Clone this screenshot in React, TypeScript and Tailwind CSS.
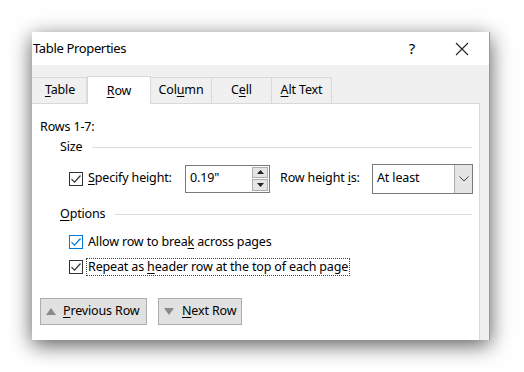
import React from 'react';

const font = { fontFamily: '"Noto Sans", "Open Sans", sans-serif' };

const U: React.FC<{ children: React.ReactNode }> = ({ children }) => <span className="underline underline-offset-2">{children}</span>;

const Tab: React.FC<{ active?: boolean; w: string; children: React.ReactNode }> = ({ active, w, children }) =>
  active ? (
    <div className={`${w} h-[28px] -mb-px bg-white border border-b-0 border-[#d9d9d9] flex items-center justify-center relative z-10 pt-[1px]`}>{children}</div>
  ) : (
    <div className={`${w} h-[26px] bg-[#f0f0f0] border border-b-0 border-l-0 border-[#d9d9d9] flex items-center justify-center`}>{children}</div>
  );

const Check: React.FC<{ blue?: boolean }> = ({ blue }) => (
  <div className={`w-[14px] h-[14px] border ${blue ? 'border-[#0078d7]' : 'border-[#333]'} bg-white flex items-center justify-center`}>
    <svg width="12" height="12" viewBox="0 0 12 12">
      <path d="M1.5 6.2 L4.5 9.2 L10.5 2.5" fill="none" stroke={blue ? '#0078d7' : '#333'} strokeWidth="1.2" />
    </svg>
  </div>
);

const Group: React.FC<{ children: React.ReactNode }> = ({ children }) => (
  <div className="flex items-center gap-[10px] pl-[28px] pr-[7px]">
    <span>{children}</span>
    <div className="flex-1 h-px bg-[#dcdcdc]" />
  </div>
);

export default function App() {
  return (
    <div className="w-[524px] h-[372px] bg-white pl-[32px] pt-[32px] text-[12.5px] tracking-[-0.15px] text-black whitespace-nowrap" style={font}>
      <div className="w-[458px] h-[308px] bg-[#f0f0f0] border-r border-[#9a9a9a] shadow-[0_5px_20px_rgba(0,0,0,0.65)] flex flex-col">
        {/* title bar */}
        <div className="h-[33px] bg-white flex items-center shrink-0">
          <span className="pl-[1px] text-[13px] tracking-[-0.35px]">Table Properties</span>
          <span className="ml-auto text-[15px] mr-[40px]">?</span>
          <svg width="14" height="14" viewBox="0 0 14 14" className="mr-[20px]">
            <path d="M1 1 L13 13 M13 1 L1 13" stroke="#222" strokeWidth="1.1" />
          </svg>
        </div>
        {/* tabs */}
        <div className="flex items-end h-[38px] shrink-0">
          <Tab w="w-[55px] border-l-0"><span className="pl-[2px]"><U>T</U>able</span></Tab>
          <Tab active w="w-[64px]"><span><U>R</U>ow</span></Tab>
          <Tab w="w-[61px]"><span>Col<U>u</U>mn</span></Tab>
          <Tab w="w-[60px]"><span>C<U>e</U>ll</span></Tab>
          <Tab w="w-[60px]"><span><U>A</U>lt Text</span></Tab>
        </div>
        {/* panel */}
        <div className="w-[448px] flex-1 bg-white border-t border-r border-[#d9d9d9] flex flex-col">
          <div className="pl-[8px] pt-[14px] leading-[18px]">Rows 1-7:</div>
          <div className="mt-[2px] leading-[18px]"><Group>Size</Group></div>
          <div className="flex items-center mt-[8px] h-[29px]">
            <div className="ml-[37px]"><Check /></div>
            <span className="ml-[5px] w-[97px]"><U>S</U>pecify height:</span>
            <div className="w-[85px] h-[28px] border border-[#7a7a7a] flex items-center">
              <span className="pl-[4px] flex-1">0.19"</span>
              <div className="w-[16px] h-[24px] mr-[1px] flex flex-col gap-[1px]">
                <div className="flex-1 bg-[#e5e5e5] border border-[#adadad] flex items-center justify-center">
                  <svg width="7" height="4" viewBox="0 0 7 4"><path d="M0 4 L3.5 0 L7 4Z" fill="#222" /></svg>
                </div>
                <div className="flex-1 bg-[#e5e5e5] border border-[#adadad] flex items-center justify-center">
                  <svg width="7" height="4" viewBox="0 0 7 4"><path d="M0 0 L3.5 4 L7 0Z" fill="#222" /></svg>
                </div>
              </div>
            </div>
            <span className="ml-[10px] w-[92px]">Row height <U>i</U>s:</span>
            <div className="w-[101px] h-[30px] border border-[#7a7a7a] flex items-center">
              <span className="pl-[4px] flex-1">At least</span>
              <div className="w-[18px] h-full bg-[#e5e5e5] border-l border-[#adadad] flex items-center justify-center">
                <svg width="10" height="6" viewBox="0 0 10 6"><path d="M0.5 0.5 L5 5 L9.5 0.5" fill="none" stroke="#444" strokeWidth="1" /></svg>
              </div>
            </div>
          </div>
          <div className="mt-[12px] leading-[18px]"><Group><U>O</U>ptions</Group></div>
          <div className="flex items-center mt-[10px] h-[18px]">
            <div className="ml-[37px]"><Check blue /></div>
            <span className="ml-[5px]">Allow row to brea<U>k</U> across pages</span>
          </div>
          <div className="flex items-center mt-[7px] h-[18px]">
            <div className="ml-[37px]"><Check /></div>
            <span className="ml-[3px] px-[1px] border border-dotted border-[#444] leading-[16px]">Repeat as <U>h</U>eader row at the top of each page</span>
          </div>
          <div className="flex mt-[22px] ml-[8px] gap-[11px]">
            <div className="w-[107px] h-[27px] bg-[#e1e1e1] border border-[#adadad] flex items-center">
              <svg width="10" height="7" viewBox="0 0 10 7" className="ml-[5px]"><path d="M0 7 L5 0 L10 7Z" fill="#8a8a8a" /></svg>
              <span className="ml-[7px]"><U>P</U>revious Row</span>
            </div>
            <div className="w-[84px] h-[27px] bg-[#e1e1e1] border border-[#adadad] flex items-center">
              <svg width="10" height="7" viewBox="0 0 10 7" className="ml-[5px]"><path d="M0 0 L5 7 L10 0Z" fill="#8a8a8a" /></svg>
              <span className="ml-[8px]"><U>N</U>ext Row</span>
            </div>
          </div>
        </div>
      </div>
    </div>
  );
}
